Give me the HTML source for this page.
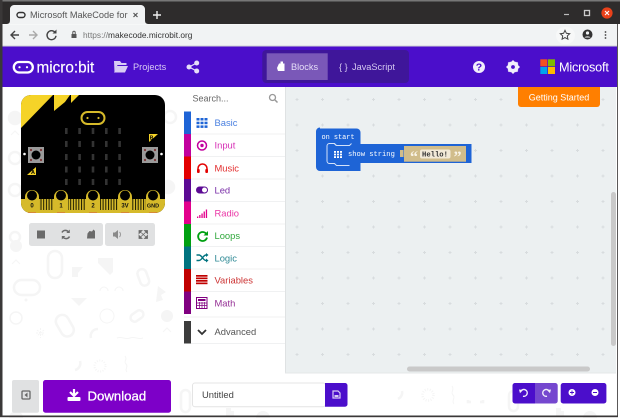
<!DOCTYPE html>
<html><head><meta charset="utf-8"><style>
html,body{margin:0;padding:0;width:620px;height:418px;overflow:hidden;background:#fff}
svg{display:block;font-family:"Liberation Sans",sans-serif}
.mono{font-family:"Liberation Mono",monospace}
</style></head><body>
<svg width="620" height="418" viewBox="0 0 620 418" xmlns="http://www.w3.org/2000/svg">
<defs>
<pattern id="grid" x="285" y="87" width="25.5" height="25.5" patternUnits="userSpaceOnUse">
<path d="M12 11v3M10.500 12.500h3" stroke="#d8dcde" stroke-width="1"/>
</pattern>
<pattern id="stripes" x="0" y="199" width="2.700" height="12" patternUnits="userSpaceOnUse">
<rect width="1" height="12" fill="#1a1a00"/>
</pattern>
</defs>
<!-- page -->
<rect width="620" height="418" fill="#fff"/>
<!-- chrome -->
<rect width="620" height="24" fill="#2e2c2c"/>
<rect width="620" height="1.500" fill="#777"/>
<path d="M6 24c3 0 4-1 4-4V9c0-2 2-4 4-4h127c2 0 4 2 4 4v11c0 3 1 4 4 4z" fill="#f1f3f4"/>
<rect x="17" y="12.500" width="8" height="5" rx="2.500" fill="none" stroke="#333" stroke-width="1.400"/>
<text x="30" y="18" font-size="9.200" fill="#555">Microsoft MakeCode for r</text>
<rect x="129" y="6" width="5" height="17" fill="#f1f3f4"/>
<path d="M133.500 13l4 4M137.500 13l-4 4" stroke="#555" stroke-width="1.200"/>
<path d="M157 11v8M153 15h8" stroke="#eee" stroke-width="1.400"/>
<path d="M564 14.500h5" stroke="#bbb" stroke-width="1.200"/>
<rect x="584.500" y="10.500" width="5" height="5" fill="none" stroke="#ccc" stroke-width="1.300"/>
<circle cx="607" cy="13" r="5.600" fill="#e9411a"/>
<path d="M605 11l4 4M609 11l-4 4" stroke="#fff" stroke-width="1.100"/>
<!-- toolbar -->
<rect y="24" width="617" height="22" fill="#f1f3f4"/>
<rect x="0" y="24" width="617" height="0.800" fill="#fff" opacity=".5"/>
<rect y="45.500" width="617" height="1" fill="#cfd1d3"/>
<path d="M19 35h-8M15 31l-4 4 4 4" fill="none" stroke="#444" stroke-width="1.400"/>
<path d="M29 35h8M33 31l4 4-4 4" fill="none" stroke="#aaa" stroke-width="1.400"/>
<path d="M55 32.300a4.500 4.500 0 1 0 1 3.500" fill="none" stroke="#444" stroke-width="1.400"/><path d="M56.500 29.500v4h-4z" fill="#444"/>
<rect x="71.500" y="34" width="5" height="4" fill="#555"/><path d="M72.800 34v-1.500a1.200 1.200 0 0 1 2.400 0V34" fill="none" stroke="#555"/>
<text x="83" y="38" font-size="8.350"><tspan fill="#777">https://</tspan><tspan fill="#333">makecode.microbit.org</tspan></text>
<rect x="556" y="27" width="19" height="17" rx="8.500" fill="#f7f8f8"/>
<path d="M565 30.300l1.400 3 3.300.4-2.400 2.200.6 3.300-2.900-1.600-2.900 1.600.6-3.300-2.400-2.200 3.300-.4z" fill="none" stroke="#444" stroke-width="1"/>
<circle cx="587.500" cy="34.500" r="5" fill="#333"/><circle cx="587.500" cy="33" r="1.600" fill="#f1f3f4"/><path d="M584.500 37.500c1-1.500 5-1.500 6 0z" fill="#f1f3f4"/>
<circle cx="605.500" cy="32" r=".9" fill="#444"/><circle cx="605.500" cy="35" r=".9" fill="#444"/><circle cx="605.500" cy="38" r=".9" fill="#444"/>
<!-- header -->
<rect y="46.500" width="617" height="40.500" fill="#4b0ecb"/>
<rect x="13.800" y="62" width="19" height="10.500" rx="5.200" fill="none" stroke="#fff" stroke-width="2.300"/>
<circle cx="19.500" cy="67.200" r="1.100" fill="#fff"/><circle cx="27" cy="67.200" r="1.100" fill="#fff"/>
<text x="36.500" y="72.500" font-size="15.300" fill="#fff" stroke="#fff" stroke-width=".15">micro:bit</text>
<path d="M114 61h6l1.500 2h5v2h-9l-3 7z" fill="#d9ccf4"/><path d="M117 66h11l-3 6.500h-11z" fill="#d9ccf4"/>
<text x="133" y="70" font-size="9.200" fill="#d9ccf4">Projects</text>
<circle cx="196.700" cy="63" r="2.500" fill="#e6def8"/><circle cx="196.700" cy="71" r="2.500" fill="#e6def8"/><circle cx="189" cy="67" r="2.500" fill="#e6def8"/>
<path d="M196.700 63l-7.700 4 7.700 4" fill="none" stroke="#e6def8" stroke-width="1.200"/>
<rect x="262.300" y="50" width="146.700" height="33" rx="4" fill="#3f169a"/>
<rect x="266.700" y="53.300" width="61" height="26.700" fill="#7a58b8"/>
<path d="M279 63.500h1.500v-2h2.500v2h1.500v7.500h-6.500l-1-3z" fill="#fff"/>
<text x="291" y="70" font-size="9.200" fill="#e6def8">Blocks</text>
<text x="339" y="70" font-size="9.200" fill="#d4c8f0">{ }</text>
<text x="352" y="70" font-size="9.200" fill="#d4c8f0">JavaScript</text>
<circle cx="479" cy="67" r="6" fill="#f2eefb"/>
<text x="479" y="70.700" font-size="10.500" font-weight="bold" fill="#4b0ecb" text-anchor="middle">?</text>
<circle cx="513" cy="67" r="4.300" fill="none" stroke="#f2eefb" stroke-width="2.800"/>
<path d="M513 60.500v13M506.500 67h13M508.400 62.400l9.200 9.200M517.600 62.400l-9.200 9.200" stroke="#f2eefb" stroke-width="2"/>
<circle cx="513" cy="67" r="1.900" fill="#4b0ecb"/>
<rect x="540.300" y="59.300" width="7" height="7" fill="#f25022"/><rect x="548" y="59.300" width="7" height="7" fill="#7fba00"/>
<rect x="540.300" y="67" width="7" height="7" fill="#00a4ef"/><rect x="548" y="67" width="7" height="7" fill="#ffb900"/>
<text x="559" y="71.500" font-size="12.700" letter-spacing="-.2" fill="#fff">Microsoft</text>
<!-- faint background shapes -->
<g fill="none" stroke="#f5f5f5" stroke-width="2.500">
<circle cx="15" cy="118" r="6" fill="#f5f5f5"/>
<path d="M11 135l4-4 4 4" stroke-width="1"/>
<circle cx="15" cy="158" r="6"/>
<circle cx="15" cy="190" r="6"/>
<circle cx="15" cy="237" r="5"/>
<circle cx="170" cy="117" r="6"/>
<circle cx="168" cy="187" r="6" fill="#f5f5f5"/>
<circle cx="16" cy="246" r="6" fill="#f5f5f5" stroke="none"/>
<path d="M12 264l4-4 4 4" stroke-width="1"/>
<rect x="48" y="251" width="14" height="27" rx="7"/>
<rect x="14" y="280" width="26" height="15" rx="7.500"/>
<circle cx="26" cy="300" r="1.500" fill="#f5f5f5" stroke="none"/>
<rect x="139" y="269" width="9" height="17" rx="4.500" transform="rotate(-20 143 278)"/>
<path d="M100 291a4 4 0 0 1 8 0M115 291a4 4 0 0 1 8 0" stroke-width="1"/>
<circle cx="16" cy="318" r="6" stroke-width="1.500"/>
<rect x="58" y="314" width="13" height="23" rx="6.500" transform="rotate(-30 65 325)"/>
<rect x="130" y="312" width="14" height="8" rx="4" transform="rotate(-35 137 316)"/>
<circle cx="107" cy="316" r="7" stroke-width="1"/>
<circle cx="167" cy="316" r="6" fill="#f5f5f5" stroke="none"/>
<path d="M163 332l4-4 4 4" stroke-width="1"/>
<path d="M98 329a7 7 0 0 0-7 9"/>
<path d="M36 333h9M40.500 328v10M37 330l7 6M44 330l-7 6" stroke-width="1" stroke-dasharray="2 1"/>
<path d="M117 338c5-2 8 2 13 0s8 2 13 0" stroke-width="1"/>
<circle cx="100" cy="366" r="5.500" stroke-dasharray="1 1.500" stroke-width="2"/>
<path d="M80 361a7 7 0 0 1-5 9"/>
<path d="M125 356c3 4-2 5 1 8s-2 5 1 8" stroke-width="1"/>
<rect x="181" y="390" width="9" height="22" rx="4.500"/>
<circle cx="428" cy="395" r="5.500" stroke-dasharray="1 1.500"/>
<path d="M402 391a7 7 0 0 1-4 8"/>
<path d="M452 386c3 4-2 6 1 9s-2 5 1 9" stroke-width="1"/>
<path d="M468 400v2h3M480 402h3v-2"/>
<rect x="509" y="391" width="9" height="20" rx="4.500"/>
</g>
<g fill="#f5f5f5"><path d="M72 267h11l-5 6v4h-6z"/><path d="M98 258h15v14l-3 3-6-6-6-6z"/><path d="M71 298h16l-8 8z"/><path d="M158 286l8 6-5 3 2 5-7 2z"/>
<circle cx="16" cy="418" r="7"/><circle cx="263" cy="418" r="7"/><circle cx="590" cy="418" r="7"/><path d="M226 416h8v-5h-3v-3h-5zM556 416h8v-5h-3v-3h-5z"/></g>
<!-- board -->
<rect x="21" y="95" width="144" height="118" rx="10" fill="#000"/>
<path d="M21 128V105a10 10 0 0 1 10-10h22z" fill="#f5d328"/>
<path d="M54 95h16l-5 7-11 9z" fill="#f5d328"/><path d="M71 95h8l-8 8z" fill="#f5d328"/>
<path d="M21 199h144v4a10 10 0 0 1-10 10H31a10 10 0 0 1-10-10z" fill="#d6ba2a"/>
<rect x="39" y="199" width="107" height="11" fill="url(#stripes)"/>
<path d="M28 212.500h8M57 212.500h8M89 212.500h8M121 212.500h8M149 212.500h8" stroke="#d87a3a" stroke-width=".8"/>
<g fill="#d6ba2a"><path d="M25 211v-14a7 7 0 0 1 14 0v14z"/><path d="M54 211v-14a7 7 0 0 1 14 0v14z"/><path d="M86 211v-14a7 7 0 0 1 14 0v14z"/><path d="M118 211v-14a7 7 0 0 1 14 0v14z"/><path d="M146 211v-14a7 7 0 0 1 14 0v14z"/></g>
<g fill="#000"><circle cx="32" cy="195.500" r="5"/><circle cx="61" cy="195.500" r="5"/><circle cx="93" cy="195.500" r="5"/><circle cx="125" cy="195.500" r="5"/><circle cx="153" cy="195.500" r="5"/></g>
<g font-size="6" font-weight="bold" fill="#111" text-anchor="middle"><text x="32" y="207.500">0</text><text x="61" y="207.500">1</text><text x="93" y="207.500">2</text><text x="125" y="207.500">3V</text><text x="153" y="207.500" font-size="5.500">GND</text></g>
<rect x="81.500" y="112" width="23" height="12" rx="6" fill="none" stroke="#d6ba2a" stroke-width="2"/>
<circle cx="87.500" cy="118" r="1.100" fill="#d6ba2a"/><circle cx="98.500" cy="118" r="1.100" fill="#d6ba2a"/>
<g fill="#333"><rect x="65" y="128" width="2.600" height="6"/><rect x="78.300" y="128" width="2.600" height="6"/><rect x="91.700" y="128" width="2.600" height="6"/><rect x="105" y="128" width="2.600" height="6"/><rect x="118.300" y="128" width="2.600" height="6"/>
<rect x="65" y="141" width="2.600" height="6"/><rect x="78.300" y="141" width="2.600" height="6"/><rect x="91.700" y="141" width="2.600" height="6"/><rect x="105" y="141" width="2.600" height="6"/><rect x="118.300" y="141" width="2.600" height="6"/>
<rect x="65" y="154" width="2.600" height="6"/><rect x="78.300" y="154" width="2.600" height="6"/><rect x="91.700" y="154" width="2.600" height="6"/><rect x="105" y="154" width="2.600" height="6"/><rect x="118.300" y="154" width="2.600" height="6"/>
<rect x="65" y="166.500" width="2.600" height="6"/><rect x="78.300" y="166.500" width="2.600" height="6"/><rect x="91.700" y="166.500" width="2.600" height="6"/><rect x="105" y="166.500" width="2.600" height="6"/><rect x="118.300" y="166.500" width="2.600" height="6"/>
<rect x="65" y="179" width="2.600" height="6"/><rect x="78.300" y="179" width="2.600" height="6"/><rect x="91.700" y="179" width="2.600" height="6"/><rect x="105" y="179" width="2.600" height="6"/><rect x="118.300" y="179" width="2.600" height="6"/></g>
<rect x="28" y="147" width="16" height="16" fill="#9a9a9a"/><circle cx="36" cy="155" r="4.500" fill="#000"/>
<g fill="#7c3434"><circle cx="31" cy="150" r="1.100"/><circle cx="41" cy="150" r="1.100"/><circle cx="31" cy="160" r="1.100"/><circle cx="41" cy="160" r="1.100"/></g>
<rect x="142" y="147" width="16" height="16" fill="#9a9a9a"/><circle cx="150" cy="155" r="4.500" fill="#000"/>
<g fill="#7c3434"><circle cx="145" cy="150" r="1.100"/><circle cx="155" cy="150" r="1.100"/><circle cx="145" cy="160" r="1.100"/><circle cx="155" cy="160" r="1.100"/></g>
<circle cx="24.500" cy="154" r="1.300" fill="#fff"/><circle cx="161.500" cy="154" r="1.300" fill="#fff"/>
<path d="M27 175l9-8v8z" fill="#f5d328"/><text x="33" y="174" font-size="5.500" font-weight="bold" fill="#000" text-anchor="middle">A</text>
<path d="M149 134h9l-9 8z" fill="#f5d328"/><text x="151.500" y="139.500" font-size="5" font-weight="bold" fill="#000" text-anchor="middle">B</text>
<!-- sim buttons -->
<rect x="29" y="223" width="74" height="23" rx="2.500" fill="#e0e1e2"/>
<rect x="105" y="223" width="50" height="23" rx="2.500" fill="#e0e1e2"/>
<rect x="37" y="230.500" width="8" height="8" fill="#6a6a6a"/>
<path d="M62 232.500a3.800 3.800 0 0 1 6.500-.5M69.500 236.500a3.800 3.800 0 0 1-6.500.5" fill="none" stroke="#6a6a6a" stroke-width="1.500"/>
<path d="M69.800 229.500v3.500h-3.500zM61.800 239.500V236h3.500z" fill="#6a6a6a"/>
<path d="M87 238.500h8v-7.500l-1.500-1.500-1.500 2-2.500-.500-2 2.500z" fill="#6a6a6a"/>
<path d="M113 232.500h2l3-2.500v9l-3-2.500h-2z" fill="#8a8a8a"/><path d="M119.500 232a3.500 3.500 0 0 1 0 5" fill="none" stroke="#9a9a9a"/>
<path d="M139 230.500h3l-3 3zM147.500 230.500h-3l3 3zM139 238.500h3l-3-3zM147.500 238.500h-3l3-3zM140 231.500l6.500 6M146.500 231.500l-6.500 6" fill="#6a6a6a" stroke="#6a6a6a" stroke-width=".8"/>
<!-- toolbox -->
<rect x="184" y="87" width="101" height="286" fill="#fff"/>
<text x="192.500" y="101.500" font-size="9" fill="#666">Search...</text>
<circle cx="272.500" cy="97.500" r="3" fill="none" stroke="#999" stroke-width="1.300"/><path d="M275 100l2.500 2.500" stroke="#999" stroke-width="1.500"/>
<g fill="none" stroke="#f0f1f2" stroke-width="1"><path d="M191 134h94M191 156.500h94M191 179h94M191 201.500h94M191 224h94M191 246.500h94M191 269h94M191 291.500h94M184 317h101M191 343.500h94"/></g>
<rect x="184" y="111.500" width="7" height="22.500" fill="#1e64d6"/>
<rect x="184" y="134" width="7" height="22.500" fill="#c2009e"/>
<rect x="184" y="156.500" width="7" height="22.500" fill="#e30000"/>
<rect x="184" y="179" width="7" height="22.500" fill="#5c0a94"/>
<rect x="184" y="201.500" width="7" height="22.500" fill="#e3008c"/>
<rect x="184" y="224" width="7" height="22.500" fill="#00A011"/>
<rect x="184" y="246.500" width="7" height="22.500" fill="#00737f"/>
<rect x="184" y="269" width="7" height="22.500" fill="#c00000"/>
<rect x="184" y="291.500" width="7" height="22.500" fill="#800080"/>
<rect x="184" y="321" width="7" height="22.500" fill="#3c3c3c"/>
<g font-size="9.400">
<text x="214.500" y="126" fill="#4a80e0">Basic</text>
<text x="214.500" y="148.500" fill="#d62fb5">Input</text>
<text x="214.500" y="171.500" fill="#e32f2f">Music</text>
<text x="214.500" y="193.500" fill="#7a2fa8">Led</text>
<text x="214.500" y="216.500" fill="#ea35a5">Radio</text>
<text x="214.500" y="239" fill="#2fa83b">Loops</text>
<text x="214.500" y="261.500" fill="#2f8a95">Logic</text>
<text x="214.500" y="283.500" fill="#cc3333">Variables</text>
<text x="214.500" y="306.500" fill="#953095">Math</text>
<text x="214.500" y="335" fill="#555">Advanced</text>
</g>
<g fill="#1e64d6"><rect x="196.500" y="118" width="3" height="2.500"/><rect x="200.500" y="118" width="3" height="2.500"/><rect x="204.500" y="118" width="3" height="2.500"/><rect x="196.500" y="121.700" width="3" height="2.500"/><rect x="200.500" y="121.700" width="3" height="2.500"/><rect x="204.500" y="121.700" width="3" height="2.500"/><rect x="196.500" y="125.400" width="3" height="2.500"/><rect x="200.500" y="125.400" width="3" height="2.500"/><rect x="204.500" y="125.400" width="3" height="2.500"/></g>
<circle cx="202" cy="145.500" r="4.500" fill="none" stroke="#c2009e" stroke-width="1.500"/><circle cx="202" cy="145.500" r="1.700" fill="#c2009e"/>
<path d="M198 171v-2.500a4.500 4.500 0 0 1 9 0v2.500" fill="none" stroke="#e30000" stroke-width="1.500"/><rect x="197" y="169" width="2.700" height="4" rx="1" fill="#e30000"/><rect x="205.300" y="169" width="2.700" height="4" rx="1" fill="#e30000"/>
<rect x="196" y="186.500" width="12" height="7" rx="3.500" fill="#5c0a94"/><circle cx="204.500" cy="190" r="2.500" fill="#fff"/>
<g fill="#e3008c"><rect x="197" y="216.500" width="1.300" height="1.500"/><rect x="199.200" y="215" width="1.300" height="3"/><rect x="201.400" y="213.500" width="1.300" height="4.500"/><rect x="203.600" y="211.500" width="1.300" height="6.500"/><rect x="205.800" y="209.500" width="1.300" height="8.500"/></g>
<path d="M206 233.500a4.500 4.500 0 1 0 1 4" fill="none" stroke="#00A011" stroke-width="1.800"/><path d="M208 231v4.500h-4.500z" fill="#00A011"/>
<path d="M196.500 255h2.500c3 0 4 5.500 7 5.500h1M196.500 260.500h2.500c3 0 4-5.500 7-5.500h1" fill="none" stroke="#00737f" stroke-width="1.400"/><path d="M206 253l2.500 2-2.500 2zM206 258.500l2.500 2-2.500 2z" fill="#00737f"/>
<g fill="#c00000"><rect x="196" y="275" width="11.500" height="1.700"/><rect x="196" y="277.500" width="11.500" height="1.700"/><rect x="196" y="280" width="11.500" height="1.700"/><rect x="196" y="282.500" width="11.500" height="1.700"/></g>
<rect x="196.500" y="297.500" width="10.500" height="11" fill="none" stroke="#800080" stroke-width="1"/><rect x="198" y="299" width="7.500" height="2" fill="#800080"/><path d="M197 303h10M197 305.500h10M199.500 302v6.500M202 302v6.500M204.500 302v6.500" stroke="#800080" stroke-width=".7"/>
<path d="M198 330l4 4 4-4" fill="none" stroke="#333" stroke-width="1.800"/>
<!-- workspace -->
<rect x="285" y="87" width="331" height="286" fill="#ecf0f1"/>
<rect x="285" y="87" width="331" height="286" fill="url(#grid)"/>
<rect x="285" y="87" width="1" height="286" fill="#dfe2e3"/>
<path d="M285 373h331" stroke="#e4e7e8" stroke-width="1"/>
<rect x="407" y="366.500" width="183" height="5" rx="2.500" fill="#c9c9c9"/>
<rect x="611" y="192" width="5" height="154" rx="2.500" fill="#c9c9c9"/>
<path d="M518 87h82v17a3 3 0 0 1-3 3h-76a3 3 0 0 1-3-3z" fill="#ff7f00"/>
<text x="559" y="100.500" font-size="9" fill="#fff" text-anchor="middle">Getting Started</text>
<!-- block -->
<path d="M320 128.500h36.500a4 4 0 0 1 4 4v11.500h-8l-2 2h-14l-2-2h-5a2 2 0 0 0-2 2v15a2 2 0 0 0 2 2h31v8h-40.500a4 4 0 0 1-4-4v-35.500a4 4 0 0 1 4-4z" fill="#1e64d6"/>
<path d="M329 144h5l2 2h14l2-2h119.500v19h-119.500l-2 2h-14l-2-2h-5a2 2 0 0 1-2-2v-15a2 2 0 0 1 2-2z" fill="#1e64d6"/>
<path d="M327 161v-15a2.500 2.500 0 0 1 2.500-2.500h5l2 2h13l2-2" fill="none" stroke="#d4e2fa" stroke-width="1"/>
<path d="M327 161a2.500 2.500 0 0 0 2.500 2.500h5l2 2h13" fill="none" stroke="#d4e2fa" stroke-width="1"/>
<text class="mono" x="321.500" y="139" font-size="6.900" fill="#fff">on start</text>
<g fill="#fff"><rect x="334" y="151" width="2" height="1.800"/><rect x="337" y="151" width="2" height="1.800"/><rect x="340" y="151" width="2" height="1.800"/><rect x="334" y="153.600" width="2" height="1.800"/><rect x="337" y="153.600" width="2" height="1.800"/><rect x="340" y="153.600" width="2" height="1.800"/><rect x="334" y="156.200" width="2" height="1.800"/><rect x="337" y="156.200" width="2" height="1.800"/><rect x="340" y="156.200" width="2" height="1.800"/></g>
<text class="mono" x="348" y="156" font-size="7.100" fill="#fff">show string</text>
<rect x="400" y="150" width="3.500" height="7" fill="#d1bd8b"/>
<rect x="404" y="146" width="62" height="15.700" fill="#d1bd8b"/>
<text x="410" y="162" font-size="16" font-weight="bold" fill="#f8f3e6" style="font-family:'Liberation Serif',serif">“</text>
<rect x="420" y="149.500" width="30.500" height="9" rx="2" fill="#f2ead8"/>
<text class="mono" x="422" y="156.700" font-size="7.200" font-weight="bold" fill="#333">Hello!</text>
<text x="453.500" y="162" font-size="16" font-weight="bold" fill="#f8f3e6" style="font-family:'Liberation Serif',serif">”</text>
<!-- bottom bar -->
<rect x="12" y="380" width="27" height="32.700" rx="2" fill="#e0e1e2"/>
<rect x="22" y="391" width="8" height="8" rx="1" fill="none" stroke="#666" stroke-width="1.300"/><path d="M27.500 392.500v5l-3-2.500z" fill="#666"/>
<rect x="43" y="380" width="128" height="32.700" rx="2.500" fill="#7d00c8"/>
<path d="M74 389v5.500M70 392l4 4 4-4" fill="none" stroke="#fff" stroke-width="2.200"/><rect x="67.500" y="397" width="13" height="4" rx="1" fill="#fff"/>
<text x="87.500" y="400.500" font-size="13.200" fill="#fff" stroke="#fff" stroke-width=".3">Download</text>
<rect x="192.500" y="383" width="133" height="23.700" rx="2.500" fill="#fff" stroke="#e4e4e4"/>
<text x="202" y="398" font-size="9.400" fill="#444">Untitled</text>
<path d="M325 383h20a2.500 2.500 0 0 1 2.500 2.500v18.700a2.500 2.500 0 0 1-2.500 2.500h-20z" fill="#4b0ecb"/>
<path d="M333 391h5l2 2v5h-7z" fill="none" stroke="#d9ccf4" stroke-width="1.200"/><rect x="334.500" y="395" width="4" height="2" fill="#d9ccf4"/>
<path d="M515 383h20v20.500h-20a2.500 2.500 0 0 1-2.500-2.500v-15.500a2.500 2.500 0 0 1 2.500-2.500z" fill="#4b0ecb"/>
<path d="M535 383h20.200a2.500 2.500 0 0 1 2.500 2.500V401a2.500 2.500 0 0 1-2.500 2.500H535z" fill="#7547cf"/>
<rect x="560.700" y="383" width="45.700" height="20.500" rx="2.500" fill="#4b0ecb"/>
<path d="M521 391a3.400 3.400 0 1 1 2 5.200" fill="none" stroke="#f2eefb" stroke-width="1.400"/><path d="M519 389.500l4 .5-3 3.300z" fill="#f2eefb"/>
<path d="M549 391a3.400 3.400 0 1 0-2 5.200" fill="none" stroke="#f2eefb" stroke-width="1.400"/><path d="M551 389.500l-4 .5 3 3.300z" fill="#f2eefb"/>
<circle cx="572" cy="392.500" r="3.500" fill="#fff"/><path d="M570 392.500h4M572 390.500v4" stroke="#4b0ecb" stroke-width=".9"/>
<circle cx="595" cy="392.500" r="3.500" fill="#fff"/><path d="M593 392.500h4" stroke="#4b0ecb" stroke-width="1"/>
<!-- window frame -->
<rect x="0" y="0" width="2.500" height="417" fill="#3a3838"/>
<rect x="617" y="24" width="1" height="393" fill="#5a5858"/>
<rect x="618" y="24" width="2" height="394" fill="#fff"/>
<rect x="0" y="415.500" width="618" height="1.700" fill="#3a3838"/>
</svg>
</body></html>
